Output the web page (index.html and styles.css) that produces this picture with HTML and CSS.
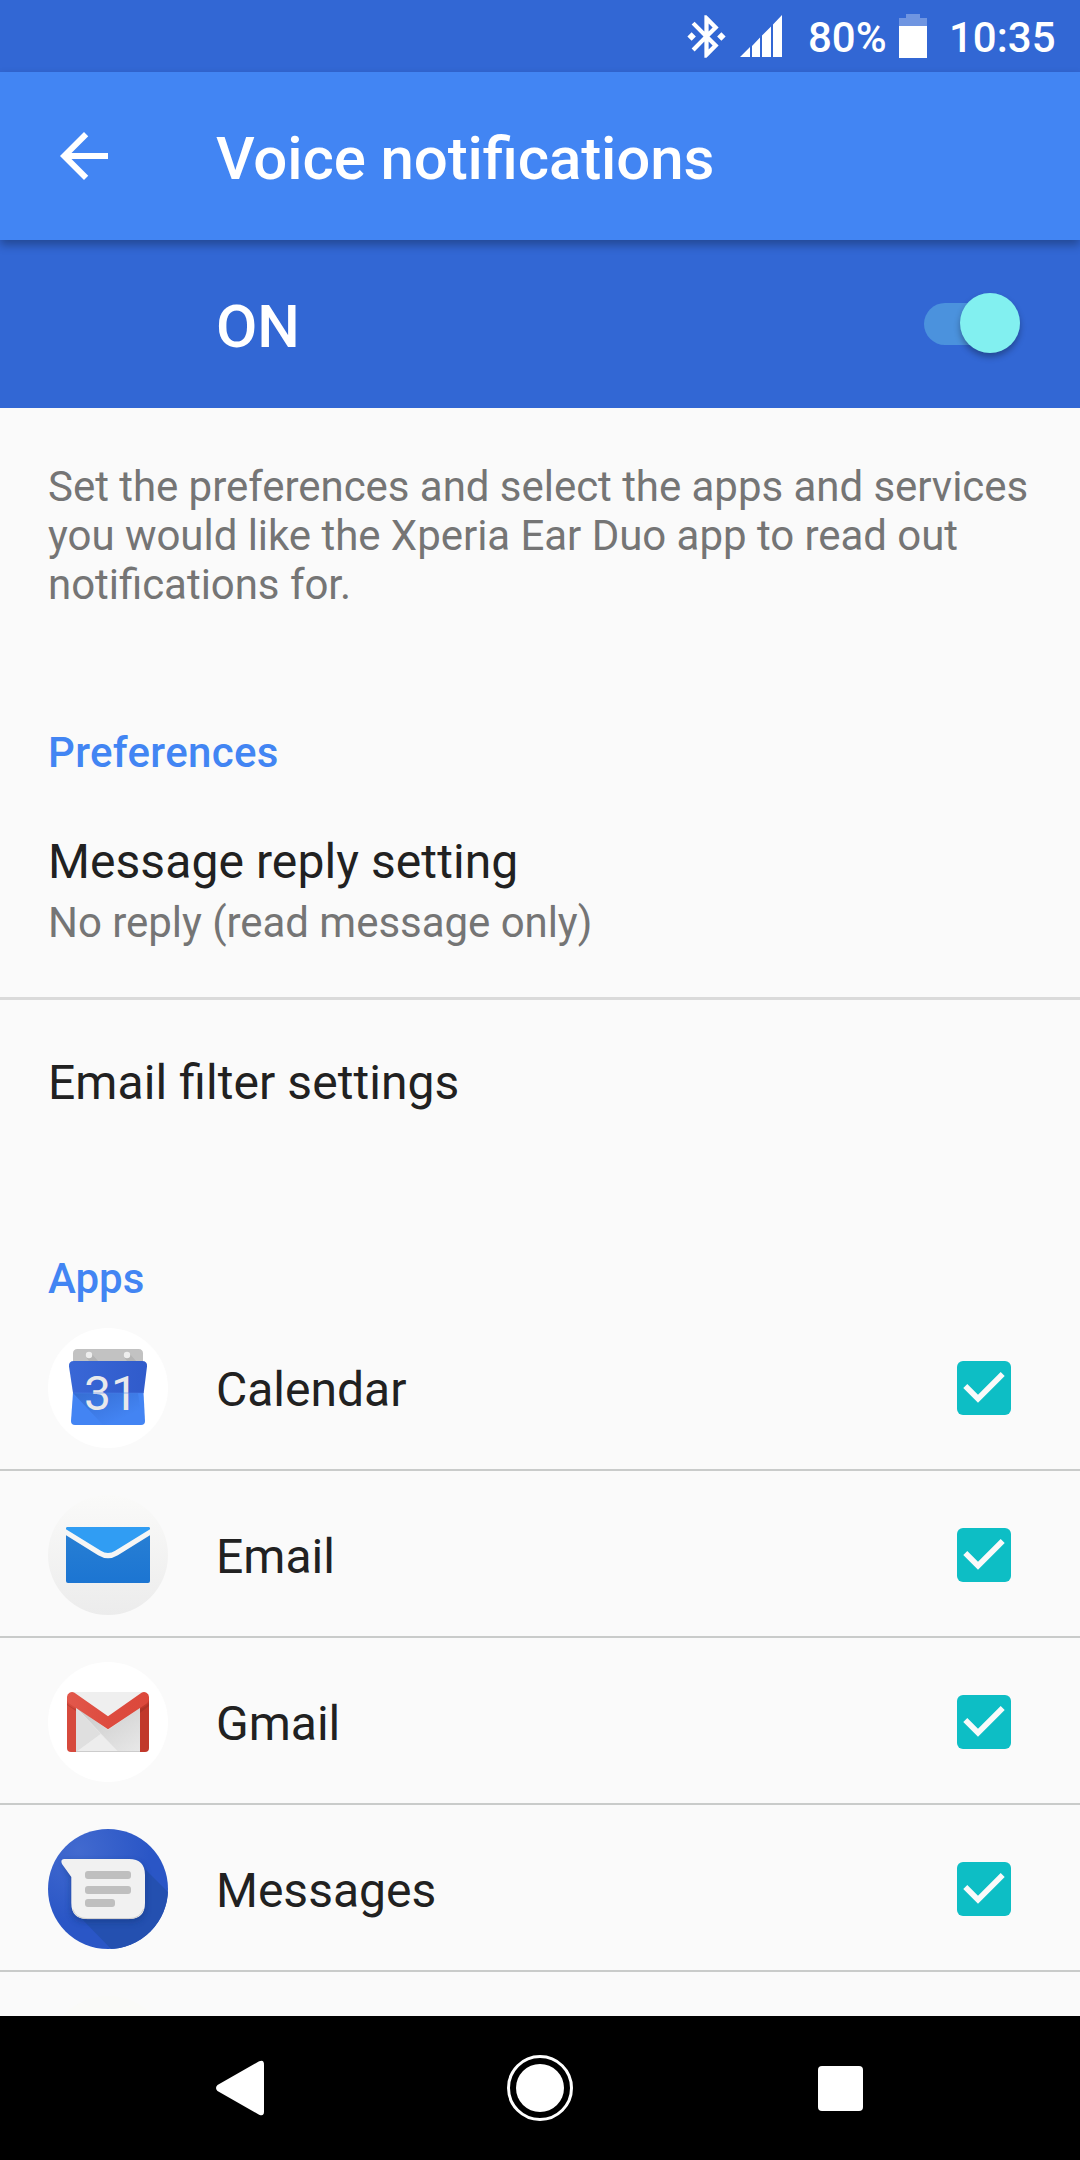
FILE: index.html
```html
<!DOCTYPE html>
<html lang="en">
<head>
<meta charset="utf-8">
<title>Voice notifications</title>
<link rel="stylesheet" href="styles.css">
</head>
<body>
<div class="screen">
  <div class="statusbar">
    <svg class="bluetooth" viewBox="0 0 24 24" fill="#fff"><path d="M7 12l-2-2-2 2 2 2 2-2zm10.71-4.29L12 2h-1v7.59L6.41 5 5 6.41 10.59 12 5 17.59 6.41 19 11 14.41V22h1l5.71-5.71-4.3-4.29 4.3-4.29zM13 5.83l1.88 1.88L13 9.59V5.83zm1.88 10.46L13 18.17v-3.76l1.88 1.88zM19 10l-2 2 2 2 2-2-2-2z"/></svg>
    <svg class="signal" viewBox="0 0 42 42" fill="#fff"><path d="M0 42L10 32V42zM12 31L20 22.500V42H12zM22 20.500L31 11.500V42H22zM33 9.500L42 0V42H33z"/></svg>
    <span class="percent">80%</span>
    <svg class="battery" viewBox="0 0 28 44" fill="#fff"><path fill-opacity=".3" d="M7 0H21V4H28V12H0V4H7z"/><path d="M0 12H28V44H0z"/></svg>
    <span class="clock">10:35</span>
  </div>

  <header class="appbar">
    <svg class="back" viewBox="0 0 24 24" fill="#fff"><path d="M20 11H7.830l5.590-5.590L12 4l-8 8 8 8 1.410-1.410L7.830 13H20v-2z"/></svg>
    <h1 class="title">Voice notifications</h1>
  </header>

  <div class="master">
    <span class="master-label">ON</span>
    <div class="switch"><div class="thumb"></div></div>
  </div>

  <main class="content">
    <p class="intro">Set the preferences and select the apps and services you would like the Xperia Ear Duo app to read out notifications for.</p>
    <h2 class="section section-prefs">Preferences</h2>
    <div class="pref pref-reply">
      <div class="pref-title">Message reply setting</div>
      <div class="pref-summary">No reply (read message only)</div>
    </div>
    <div class="pref pref-filter">
      <div class="pref-title">Email filter settings</div>
    </div>
    <h2 class="section section-apps">Apps</h2>

    <ul class="apps">
      <li class="app">
        <svg class="app-icon" viewBox="0 0 120 120">
          <defs>
            <linearGradient id="calTop" x1="0" y1="0" x2="1" y2="0"><stop offset="0" stop-color="#3967d6"/><stop offset="1" stop-color="#305bcb"/></linearGradient>
            <linearGradient id="calFade" x1="0" y1="0" x2="1" y2="1"><stop offset="0" stop-color="#2450a8" stop-opacity=".45"/><stop offset=".75" stop-color="#2450a8" stop-opacity="0"/></linearGradient>
          </defs>
          <circle cx="60" cy="60" r="60" fill="#fff"/>
          <path d="M25 34V25.500Q25 21 29.500 21H90.500Q95 21 95 25.500V34z" fill="#c2c2c2"/>
          <path d="M43 25l7 8h-9l-3-4zM81 25l7 8h-9l-3-4z" fill="#aaa" opacity=".6"/>
          <circle cx="41" cy="27" r="3.200" fill="#eee"/><circle cx="79" cy="27" r="3.200" fill="#eee"/>
          <path d="M25 64.500H95.500L97 93Q97 97 93 97H27Q23 97 23 93z" fill="#4384f3"/>
          <path d="M25 65H90L95 97H55z" fill="url(#calFade)"/>
          <path d="M26 33H94Q99.500 33 99 38.500L95.700 65H25L21 38.500Q20.500 33 26 33z" fill="url(#calTop)"/>
          <text class="cal-day" x="36" y="82">31</text>
          <path d="M25 65H95.500" stroke="#4a7ee8" stroke-width="1" opacity=".5"/>
        </svg>
        <span class="app-name">Calendar</span>
        <svg class="check" viewBox="0 0 54 54"><rect width="54" height="54" rx="6" fill="#0dbec5"/><path d="M8.300 25L21 37.700L45.700 13" fill="none" stroke="#fafafa" stroke-width="5.700"/></svg>
      </li>
      <li class="app">
        <svg class="app-icon" viewBox="0 0 120 120">
          <defs>
            <linearGradient id="paper" x1="0" y1="0" x2="0" y2="1"><stop offset="0" stop-color="#fafaf9"/><stop offset="1" stop-color="#ececec"/></linearGradient>
            <linearGradient id="mail" x1="0" y1="0" x2="0" y2="1"><stop offset="0" stop-color="#2980d4"/><stop offset="1" stop-color="#1c75d2"/></linearGradient>
          </defs>
          <circle cx="60" cy="60" r="60" fill="url(#paper)"/>
          <rect x="18" y="32" width="84" height="56" rx="2" fill="url(#mail)"/>
          <path d="M18 36V34Q18 32 20 32H100Q102 32 102 34V36L68 58Q60 63 52 58z" fill="#309df3"/>
          <path d="M15 35.400L51.500 58Q60 63.200 68.500 58L105 35.400" fill="none" stroke="#f6f6f5" stroke-width="5.100"/>
        </svg>
        <span class="app-name">Email</span>
        <svg class="check" viewBox="0 0 54 54"><rect width="54" height="54" rx="6" fill="#0dbec5"/><path d="M8.300 25L21 37.700L45.700 13" fill="none" stroke="#fafafa" stroke-width="5.700"/></svg>
      </li>
      <li class="app">
        <svg class="app-icon" viewBox="0 0 120 120">
          <defs>
            <linearGradient id="red" x1="0" y1="0" x2="1" y2="0"><stop offset="0" stop-color="#e2584c"/><stop offset=".5" stop-color="#dd4b3f"/><stop offset="1" stop-color="#dc483b"/></linearGradient>
            <linearGradient id="fold" x1="0" y1="0" x2="1" y2="1"><stop offset="0" stop-color="#c8c8c8"/><stop offset="1" stop-color="#e8e8e8"/></linearGradient>
          </defs>
          <circle cx="60" cy="60" r="60" fill="#fff"/>
          <path d="M24 30H96V90H24z" fill="#e6e6e6"/>
          <path d="M24 30H96L60 56z" fill="#efefef"/>
          <path d="M28 45L70.500 90H92V46L60 68z" fill="url(#fold)"/>
          <path d="M28 46V90L52.700 72z" fill="#dfdfdf"/>
          <path d="M28 90L52.700 72L70.500 90z" fill="#ededed"/>
          <path d="M28 89.500H92" stroke="#ccc" stroke-width="1"/>
          <path d="M19 35H28V90H23Q19 90 19 86z" fill="#d64a3d"/>
          <path d="M92 35H101V86Q101 90 97 90H92z" fill="#c1382b"/>
          <path d="M19 41Q22 45 28 47V49L19 43zM101 41Q98 45 92 47V51L101 44z" fill="#8e2a22" opacity=".35"/>
          <path d="M26.500 30.800L60 54.300L93.500 30.800Q96 29.200 98.500 30.800Q101 32.400 101 35V36Q101 40 98 42L60 67.200L22 42Q19 40 19 36V35Q19 32.400 21.500 30.800Q24 29.200 26.500 30.800z" fill="url(#red)"/>
        </svg>
        <span class="app-name">Gmail</span>
        <svg class="check" viewBox="0 0 54 54"><rect width="54" height="54" rx="6" fill="#0dbec5"/><path d="M8.300 25L21 37.700L45.700 13" fill="none" stroke="#fafafa" stroke-width="5.700"/></svg>
      </li>
      <li class="app">
        <svg class="app-icon" viewBox="0 0 120 120">
          <defs>
            <radialGradient id="msg" cx=".25" cy=".18" r=".6"><stop offset="0" stop-color="#426acf"/><stop offset="1" stop-color="#2a56c6"/></radialGradient>
            <clipPath id="disc"><circle cx="60" cy="60" r="60"/></clipPath>
            <filter id="soft" x="-20%" y="-20%" width="140%" height="150%"><feGaussianBlur stdDeviation="3"/></filter>
          </defs>
          <circle cx="60" cy="60" r="60" fill="url(#msg)"/>
          <g clip-path="url(#disc)">
            <path d="M92 35L125 68V125H68L30 86z" fill="#2450b0"/>
            <path d="M15 33H82Q97 33 97 48V78Q97 93 82 93H38Q23 93 23 78V50z" fill="#173a85" opacity=".6" filter="url(#soft)"/>
          </g>
          <path d="M16 30H81Q97 30 97 46V74Q97 90 81 90H39Q23.300 90 23.300 74V48L14 35Q12 30.500 16 30z" fill="#f1f1f1"/>
          <path d="M24.500 80Q28 89.600 39 89.600H81Q92 89.600 95.500 80" fill="none" stroke="#cfcfcf" stroke-width="1"/>
          <g fill="#bfbfbf"><rect x="37" y="42" width="46" height="8" rx="3"/><rect x="37" y="57" width="46" height="8" rx="3"/><rect x="37" y="70" width="30" height="8" rx="3"/></g>
        </svg>
        <span class="app-name">Messages</span>
        <svg class="check" viewBox="0 0 54 54"><rect width="54" height="54" rx="6" fill="#0dbec5"/><path d="M8.300 25L21 37.700L45.700 13" fill="none" stroke="#fafafa" stroke-width="5.700"/></svg>
      </li>
      <li class="app">
        <svg class="app-icon" viewBox="0 0 120 120"><circle cx="60" cy="60" r="60" fill="#fafaf8"/></svg>
      </li>
    </ul>
  </main>

  <nav class="navbar">
    <svg class="nav-back" viewBox="0 0 49 56"><path d="M1.500 25L44 .8Q49 -1.500 49 4V52Q49 57.500 44 55.200L1.500 31Q-1.500 28 1.500 25z" fill="#fff"/></svg>
    <svg class="nav-home" viewBox="0 0 66 66"><circle cx="33" cy="33" r="31.500" fill="none" stroke="#fff" stroke-width="3"/><circle cx="33" cy="33" r="24" fill="#fff"/></svg>
    <div class="nav-recent"></div>
  </nav>
</div>
</body>
</html>
```
FILE: styles.css
```css
* { box-sizing: border-box; }
body, h1, h2, p, ul { margin: 0; padding: 0; }
svg { display: block; flex: none; }

body {
  font-family: Roboto, sans-serif;
  font-feature-settings: "liga" 1;
  background: #fafafa;
}

.screen {
  width: 1080px;
  height: 2160px;
  display: flex;
  flex-direction: column;
  overflow: hidden;
}

.statusbar {
  flex: none;
  height: 72px;
  display: flex;
  align-items: flex-start;
  background: #3267d4;
  color: #fff;
  font-size: 42px;
  font-weight: 500;
  line-height: 49px;
  padding-left: 681px;
}
.bluetooth { width: 51px; height: 51px; margin-top: 11px; }
.signal { width: 42px; height: 42px; margin: 15px 0 0 8px; }
.percent { width: 91px; margin: 13px 0 0 26px; }
.battery { width: 28px; height: 44px; margin-top: 14px; }
.clock { margin: 13px 0 0 22px; }

.appbar {
  flex: none;
  position: relative;
  z-index: 1;
  height: 168px;
  display: flex;
  align-items: center;
  gap: 96px;
  padding-left: 48px;
  background: #4285f3;
  box-shadow: 0 5px 9px rgba(0, 0, 0, .3);
}
.back { width: 72px; height: 72px; }
.title, .master-label {
  margin-top: 5px;
  color: #fff;
  font-size: 60px;
  font-weight: 500;
  line-height: 71px;
}
.title { letter-spacing: -.1px; }

.master {
  flex: none;
  height: 168px;
  display: flex;
  align-items: center;
  justify-content: space-between;
  padding: 0 60px 0 216px;
  background: #3267d4;
}
.switch {
  width: 96px;
  height: 42px;
  display: flex;
  align-items: center;
  justify-content: flex-end;
  border-radius: 21px;
  background: #4b92dd;
}
.thumb {
  flex: none;
  width: 60px;
  height: 60px;
  margin-bottom: 2px;
  border-radius: 50%;
  background: #82f0f0;
  box-shadow: 0 4px 6px rgba(0, 0, 0, .3);
}

.content {
  flex: 1;
  min-height: 0;
  overflow: hidden;
}
.intro {
  padding: 54px 48px 0;
  color: #757575;
  font-size: 42px;
  line-height: 49px;
  letter-spacing: -.04px;
}
.section {
  margin-top: 119px;
  padding: 0 48px;
  color: #4285f3;
  font-size: 42px;
  font-weight: 500;
  line-height: 49px;
}
.section-prefs { letter-spacing: .35px; }
.pref { padding: 0 48px; }
.pref-title {
  color: #212121;
  font-size: 48px;
  line-height: 57px;
  letter-spacing: .08px;
}
.pref-summary {
  margin-top: 8px;
  color: #757575;
  font-size: 42px;
  line-height: 49px;
  letter-spacing: -.04px;
}
.pref-reply {
  padding-top: 56px;
  padding-bottom: 50px;
  border-bottom: 3px solid #dadada;
}
.pref-filter { padding-top: 54px; }
.section-apps { margin-top: 143px; }

.apps { margin-top: 1px; list-style: none; }
.app {
  height: 167px;
  display: flex;
  align-items: center;
  padding: 3px 69px 0 48px;
  border-bottom: 2px solid #c9cbca;
}
.app-icon { width: 120px; height: 120px; }
.app-name {
  flex: 1;
  margin: 3px 0 0 48px;
  color: #212121;
  font-size: 48px;
  line-height: 57px;
}
.check { width: 54px; height: 54px; }
.cal-day { font-size: 48px; fill: #e8e9ec; }

.navbar {
  flex: none;
  height: 144px;
  display: flex;
  align-items: center;
  padding-left: 216px;
  background: #000;
}
.nav-back { width: 48px; height: 56px; }
.nav-home { width: 66px; height: 66px; margin-left: 243px; }
.nav-recent {
  width: 45px;
  height: 45px;
  margin-left: 245px;
  border-radius: 4px;
  background: #fff;
}
```
